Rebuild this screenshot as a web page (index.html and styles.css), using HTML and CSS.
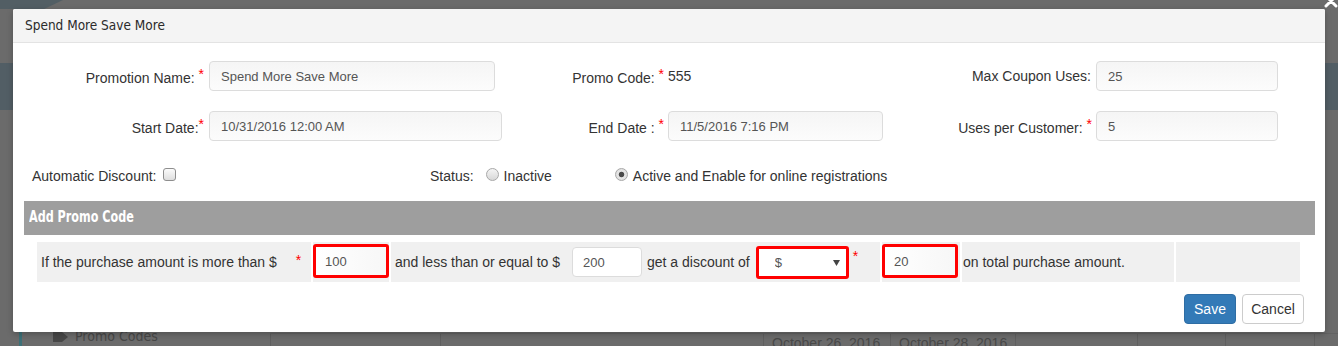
FILE: index.html
```html
<!DOCTYPE html>
<html>
<head>
<meta charset="utf-8">
<title>Spend More Save More</title>
<link rel="stylesheet" href="styles.css">
</head>
<body>
<div class="page">
  <div class="pg-top"><div class="pg-logo"></div></div>
  <div class="pg-banner"></div>
  <div class="pg-bottom">
    <div class="side">
      <div class="side-bar"></div>
      <div class="side-item">
        <svg class="tag" width="16" height="12" viewBox="0 0 16 12"><path d="M0 1 L9 1 L15 6 L9 11 L0 11 Z" fill="#474747"/></svg>
        <span>Promo Codes</span>
      </div>
    </div>
    <div class="bg-cells">
      <div class="bg-cell w170"></div>
      <div class="bg-cell w323"></div>
      <div class="bg-cell w127">October 26, 2016</div>
      <div class="bg-cell w125">October 28, 2016</div>
      <div class="bg-cell w122"></div>
      <div class="bg-cell w88"></div>
      <div class="bg-cell w89"></div>
      <div class="bg-cell w24"></div>
    </div>
  </div>
</div>

<span class="close-x">
  <svg width="16" height="16" viewBox="0 0 16 16"><path d="M3 3 L13 13 M13 3 L3 13" stroke="#ffffff" stroke-width="3" stroke-linecap="round"/></svg>
</span>

<div class="modal">
  <div class="modal-header"><h4 class="modal-title">Spend More Save More</h4></div>
  <div class="modal-body">
    <div class="form-grid">
      <label class="lbl">Promotion Name: <span class="req">*</span></label>
      <div><input class="fc w286" type="text" value="Spend More Save More"></div>
      <label class="lbl lbl-mid">Promo Code: <span class="req">*</span></label>
      <div class="static">555</div>
      <label class="lbl lbl-mid lbl-pad5">Max Coupon Uses:</label>
      <div><input class="fc w182" type="text" value="25"></div>

      <label class="lbl">Start Date:<span class="req">*</span></label>
      <div><input class="fc w293" type="text" value="10/31/2016 12:00 AM"></div>
      <label class="lbl lbl-mid">End Date : <span class="req">*</span></label>
      <div><input class="fc w215" type="text" value="11/5/2016 7:16 PM"></div>
      <label class="lbl lbl-mid">Uses per Customer: <span class="req">*</span></label>
      <div><input class="fc w182" type="text" value="5"></div>
    </div>

    <div class="opts-row">
      <div class="auto">
        <span>Automatic Discount:</span>
        <input class="chk" type="checkbox">
      </div>
      <div class="status">
        <span class="status-lbl">Status:</span>
        <label class="radio-opt"><input class="rad" type="radio" name="st"><span>Inactive</span></label>
        <label class="radio-opt radio-opt2"><input class="rad" type="radio" name="st" checked><span>Active and Enable for online registrations</span></label>
      </div>
    </div>

    <div class="bar"><span class="bar-text">Add Promo Code</span></div>

    <div class="rule">
      <div class="cell c1">If the purchase amount is more than $<span class="req req-cell">*</span></div>
      <div class="cell c2"><input class="fc-red w76" type="text" value="100"></div>
      <div class="cell c3">
        <span>and less than or equal to $</span>
        <input class="fc-plain" type="text" value="200">
        <span>get a discount of</span>
        <span class="sel-wrap">
          <select class="sel"><option>$</option><option>%</option></select>
          <svg class="sel-arrow" width="7" height="6" viewBox="0 0 7 6"><path d="M0 0 L7 0 L3.5 6 Z" fill="#444"/></svg>
        </span>
        <span class="req req-sel">*</span>
      </div>
      <div class="cell c4"><input class="fc-red w76" type="text" value="20"></div>
      <div class="cell c5">on total purchase amount.</div>
      <div class="cell c6"></div>
    </div>

    <div class="footer">
      <button class="btn btn-save" type="button">Save</button>
      <button class="btn btn-cancel" type="button">Cancel</button>
    </div>
  </div>
</div>
</body>
</html>
```

FILE: styles.css
```css
* { box-sizing: border-box; }

html, body {
  margin: 0;
  padding: 0;
}

body {
  width: 1338px;
  height: 346px;
  overflow: hidden;
  background: #6b6b6b;
  font-family: "Liberation Sans", Arial, sans-serif;
  color: #333;
  position: relative;
}

/* ---------- dimmed page behind the modal ---------- */
.page {
  width: 1338px;
  height: 346px;
  overflow: hidden;
}

.pg-top {
  height: 9px;
}

.pg-logo {
  width: 63px;
  height: 9px;
  background: #525e64;
  clip-path: polygon(0 0, 100% 0, 70% 100%, 0 100%);
}

.pg-banner {
  margin-top: 54px;
  height: 47px;
  background: #525e65;
}

.pg-bottom {
  margin-top: 216px;
  display: flex;
  height: 20px;
  overflow: hidden;
}

.side {
  width: 270px;
  padding-left: 19px;
  display: flex;
}

.side-bar {
  width: 3px;
  height: 20px;
  background: #3d7077;
}

.side-item {
  margin-left: 31px;
  display: flex;
  align-items: center;
  gap: 6px;
  height: 17px;
  margin-top: 2px;
  font-family: "DejaVu Sans Condensed", "Liberation Sans", sans-serif;
  font-size: 14px;
  line-height: 17px;
  color: #474747;
}

.bg-cells {
  display: flex;
  margin-top: 7px;
  border-top: 1px solid #626262;
  height: 13px;
}

.bg-cell {
  border-left: 1px solid #5f5f5f;
  font-size: 14px;
  line-height: 16px;
  color: #484848;
  padding: 1px 0 0 8px;
  white-space: nowrap;
  overflow: hidden;
}

.w170 { width: 170px; }
.w323 { width: 323px; }
.w127 { width: 127px; }
.w125 { width: 125px; }
.w122 { width: 122px; }
.w88 { width: 88px; }
.w89 { width: 89px; }
.w24 { width: 24px; }

.close-x {
  position: absolute;
  left: 1323px;
  top: -7px;
  width: 16px;
  height: 16px;
}

/* ---------- modal ---------- */
.modal {
  position: absolute;
  left: 13px;
  top: 9px;
  width: 1312px;
  height: 323px;
  background: #fff;
  border-radius: 2px;
  box-shadow: 0 2px 6px rgba(0, 0, 0, 0.25);
  overflow: hidden;
}

.modal-header {
  height: 34px;
  background: #f4f4f4;
  border-bottom: 1px solid #e3e3e3;
  padding: 0 12px;
}

.modal-title {
  margin: 0;
  font-family: "DejaVu Sans Condensed", "Liberation Sans", sans-serif;
  font-weight: normal;
  font-size: 13.5px;
  line-height: 33px;
  color: #2b2b2b;
}

.modal-body {
  padding-top: 18px;
}

/* form grid */
.form-grid {
  display: grid;
  grid-template-columns: 196px 293px 166px 215px 213px 182px;
  grid-auto-rows: 30px;
  row-gap: 20px;
  align-items: center;
}

.lbl {
  font-size: 14px;
  color: #333;
  text-align: right;
  padding-right: 5px;
  white-space: nowrap;
}

.lbl-mid { padding-right: 4px; }
.lbl-pad5 { padding-right: 5px; }

.req {
  color: #f00;
  font-size: 14px;
  vertical-align: 4px;
}

.static {
  font-size: 14px;
  color: #333;
}

.fc {
  display: block;
  height: 30px;
  border: 1px solid #dcdcdc;
  border-radius: 4px;
  background: linear-gradient(to bottom, #f5f5f5, #fcfcfc);
  padding: 0 11px;
  font-family: "Liberation Sans", Arial, sans-serif;
  font-size: 13px;
  color: #555;
  outline: none;
}

.w286 { width: 286px; }
.w293 { width: 293px; }
.w215 { width: 215px; }
.w182 { width: 182px; }

/* options row */
.opts-row {
  margin-top: 25px;
  height: 20px;
  padding-left: 19px;
  display: flex;
  align-items: center;
  font-size: 14px;
  color: #333;
}

.auto {
  width: 398px;
  display: flex;
  align-items: center;
}

.chk {
  appearance: none;
  -webkit-appearance: none;
  width: 13px;
  height: 13px;
  margin: 0 0 3px 6px;
  border: 1px solid #8e8e8e;
  border-radius: 3px;
  background: linear-gradient(to bottom, #fbfbfb, #dedede);
}

.status {
  display: flex;
  align-items: center;
}

.status-lbl {
  margin-right: 12px;
}

.radio-opt {
  display: flex;
  align-items: center;
  gap: 5px;
}

.radio-opt2 {
  margin-left: 63px;
  gap: 5px;
}

.rad {
  appearance: none;
  -webkit-appearance: none;
  width: 13px;
  height: 13px;
  margin: 0 0 3px 0;
  border: 1px solid #a8a8a8;
  border-radius: 50%;
  background: linear-gradient(to bottom, #f4f4f4, #d8d8d8);
}

.rad:checked {
  background: radial-gradient(circle, #4a4a4a 0, #4a4a4a 2.3px, #e6e6e6 3.2px, #d9d9d9 100%);
}

/* bar */
.bar {
  margin: 15px 10px 0 11px;
  height: 34px;
  background: #9e9e9e;
  color: #fff;
  font-family: "DejaVu Sans Condensed", "Liberation Sans", sans-serif;
  font-weight: bold;
  font-size: 15px;
  line-height: 33px;
  padding-left: 5px;
}

.bar-text {
  display: inline-block;
  transform: scaleX(0.83);
  transform-origin: left center;
}

/* rule row */
.rule {
  margin: 7px 0 0 24px;
  display: flex;
  gap: 2px;
  height: 40px;
}

.cell {
  background: #f0f0f0;
  display: flex;
  align-items: center;
  font-size: 14px;
  color: #333;
  white-space: nowrap;
}

.c1 { width: 274px; padding-left: 4px; }
.c2 { width: 76px; }
.c3 { width: 489px; padding-left: 4px; }
.c4 { width: 78px; }
.c5 { width: 212px; padding-left: 1px; }
.c6 { width: 124px; }

.req-cell { margin-left: 19px; align-self: flex-start; margin-top: 10px; }

.fc-red {
  display: block;
  height: 34px;
  border: 3px solid #f00;
  border-radius: 3px;
  background: linear-gradient(to right, #ffffff, #f7f7f7);
  padding: 0 9px;
  font-family: "Liberation Sans", Arial, sans-serif;
  font-size: 13px;
  color: #555;
  outline: none;
  margin-bottom: 2px;
}

.w76 { width: 76px; }

.fc-plain {
  width: 70px;
  height: 30px;
  margin: 0 5px 0 12px;
  border: 1px solid #dcdcdc;
  border-radius: 4px;
  background: #fff;
  padding: 0 10px;
  font-family: "Liberation Sans", Arial, sans-serif;
  font-size: 13px;
  color: #555;
  outline: none;
}

.sel-wrap {
  position: relative;
  margin-left: 6px;
  display: block;
}

.sel {
  appearance: none;
  -webkit-appearance: none;
  display: block;
  width: 93px;
  height: 33px;
  border: 3px solid #f00;
  border-radius: 3px;
  background: #fff;
  padding: 0 0 0 16px;
  font-family: "Liberation Sans", Arial, sans-serif;
  font-size: 13px;
  color: #555;
  outline: none;
}

.sel-arrow {
  position: absolute;
  right: 9px;
  top: 14px;
}

.req-sel {
  margin-left: 4px;
  align-self: flex-start;
  margin-top: 6px;
}

/* footer */
.footer {
  margin-top: 12px;
  display: flex;
  justify-content: flex-end;
  gap: 6px;
  padding-right: 21px;
}

.btn {
  height: 30px;
  border-radius: 4px;
  font-family: "Liberation Sans", Arial, sans-serif;
  font-size: 14px;
  padding: 0;
  cursor: pointer;
}

.btn-save {
  width: 52px;
  background: #337ab7;
  border: 1px solid #2e6da4;
  color: #fff;
}

.btn-cancel {
  width: 62px;
  background: #fff;
  border: 1px solid #ccc;
  color: #333;
}
```
